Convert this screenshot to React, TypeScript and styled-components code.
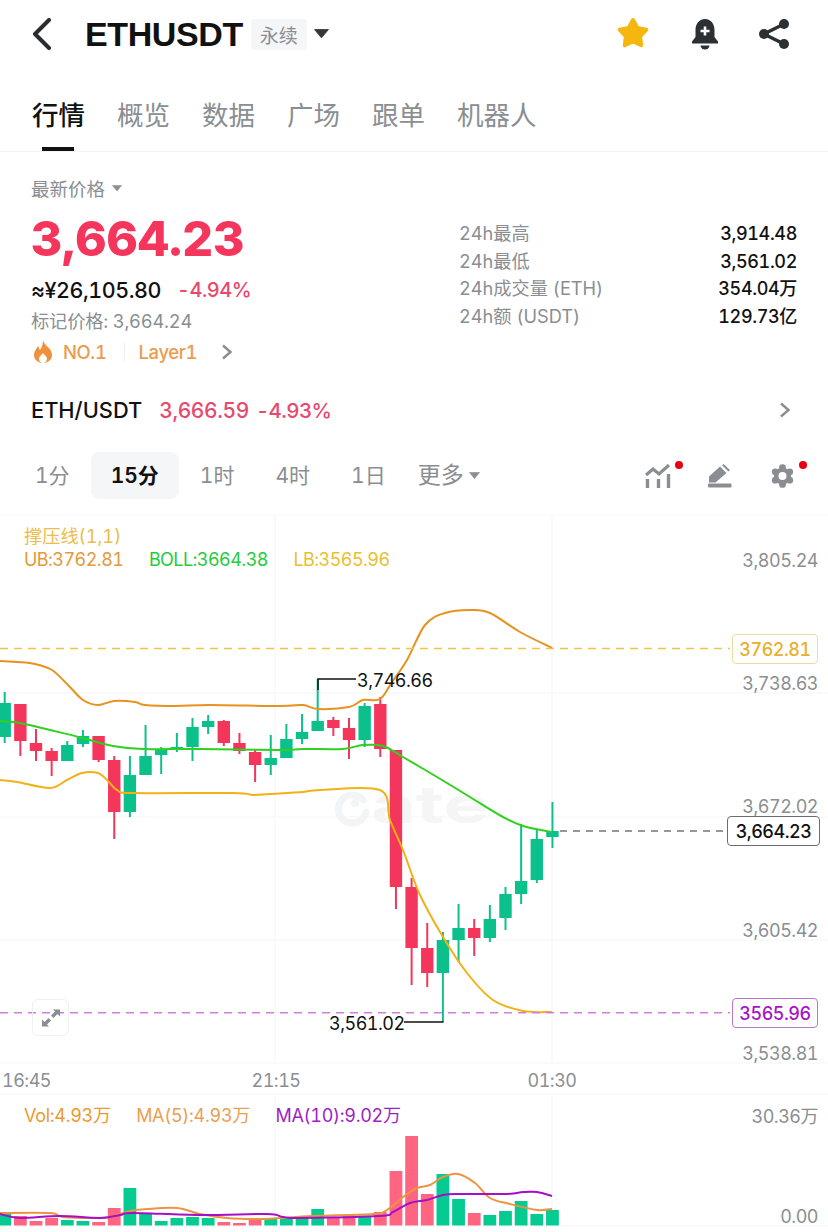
import styled, { createGlobalStyle } from 'styled-components';

const RED = '#f5365c';
const GREEN = '#0bc08a';
const GREY = '#8a8e92';

const GlobalStyle = createGlobalStyle`
    html, body {
        margin: 0;
        padding: 0;
        background: #fff;
    }
    body {
        font-family: Inter, "Noto Sans CJK SC", sans-serif;
        font-feature-settings: "tnum";
        color: #111;
    }
`;

// [high, low, body top, body bottom, up?] in page pixels, read off the screenshot
const candles: [number, number, number, number, boolean][] = [
    [692, 743, 703, 737, true], [704, 756, 704, 741, false], [729, 761, 743, 751, false],
    [748, 776, 751, 761, false], [741, 761, 745, 761, true], [730, 747, 736, 744, true],
    [736, 762, 736, 760, false], [756, 839, 760, 812, false], [756, 817, 775, 812, true],
    [725, 775, 756, 775, true], [747, 774, 749, 755, true], [733, 752, 747, 750, true],
    [718, 761, 727, 747, true], [715, 734, 721, 727, true], [720, 746, 721, 743, false],
    [733, 754, 743, 751, false], [749, 782, 752, 765, false], [735, 775, 758, 765, true],
    [724, 758, 739, 758, true], [714, 744, 732, 739, true], [679, 721, 721, 731, true],
    [717, 736, 720, 728, false], [718, 759, 728, 740, false], [703, 747, 706, 740, true],
    [697, 757, 704, 749, false], [750, 909, 750, 887, false], [878, 985, 887, 948, false],
    [923, 987, 948, 973, false], [932, 1022, 940, 973, true], [904, 962, 928, 940, true],
    [919, 956, 928, 938, false], [905, 942, 919, 938, true], [887, 930, 894, 918, true],
    [824, 904, 881, 894, true], [830, 883, 839, 880, true], [802, 848, 831, 837, true],
];

const volumes = [
    1212, 1216, 1221, 1218, 1220, 1221, 1222, 1208, 1188, 1213, 1221, 1218,
    1217, 1218, 1222, 1223, 1218, 1218, 1219, 1218, 1209, 1217, 1215, 1217,
    1212, 1171, 1136, 1194, 1174, 1199, 1213, 1215, 1211, 1201, 1214, 1210,
];

const upperBand: [number, number][] = [
    [0, 661], [18, 662], [35, 664], [52, 670], [68, 685], [83, 700], [98, 705], [114, 701], [135, 702],
    [145, 705], [176, 706], [210, 705], [280, 706], [303, 705], [318, 709], [349, 707], [363, 700],
    [380, 699], [392, 682], [407, 660], [425, 625], [445, 613], [470, 610], [490, 613], [520, 632], [552, 648],
];
const midBand: [number, number][] = [
    [0, 721], [20, 723], [50, 730], [83, 738], [113, 746], [143, 749], [200, 749], [280, 750], [303, 749],
    [343, 749], [363, 745], [383, 746], [403, 757], [437, 777], [470, 797], [503, 817], [523, 826], [552, 832],
];
const lowerBand: [number, number][] = [
    [0, 780], [17, 782], [50, 788], [67, 780], [82, 773], [98, 773], [108, 781], [117, 790], [133, 793],
    [233, 793], [253, 795], [270, 794], [303, 792], [320, 790], [380, 790], [390, 820], [403, 850],
    [420, 895], [443, 937], [467, 973], [493, 1000], [523, 1011], [552, 1012],
];
const volOrange: [number, number][] = [
    [0, 1213], [50, 1213], [63, 1217], [93, 1218], [110, 1217], [130, 1211], [147, 1209], [177, 1208],
    [200, 1214], [227, 1218], [260, 1219], [280, 1218], [313, 1216], [373, 1214], [387, 1210], [403, 1197],
    [417, 1188], [430, 1185], [443, 1177], [458, 1174], [475, 1183], [490, 1198], [510, 1204], [537, 1210], [552, 1209],
];
const volPurple: [number, number][] = [
    [0, 1214], [20, 1218], [60, 1216], [100, 1218], [120, 1215], [133, 1213], [200, 1215], [267, 1214],
    [283, 1217], [300, 1218], [380, 1216], [393, 1212], [410, 1203], [427, 1200], [443, 1195], [460, 1194],
    [507, 1194], [523, 1192], [537, 1192], [552, 1196],
];

// catmull-rom through the points, so the bands don't look like polylines
const smooth = (pts: [number, number][]) => {
    let d = `M${pts[0][0]} ${pts[0][1]}`;
    for (let i = 0; i < pts.length - 1; i++) {
        const p0 = pts[Math.max(i - 1, 0)];
        const p1 = pts[i];
        const p2 = pts[i + 1];
        const p3 = pts[Math.min(i + 2, pts.length - 1)];
        const c1x = p1[0] + (p2[0] - p0[0]) / 6;
        const c1y = p1[1] + (p2[1] - p0[1]) / 6;
        const c2x = p2[0] - (p3[0] - p1[0]) / 6;
        const c2y = p2[1] - (p3[1] - p1[1]) / 6;
        d += `C${c1x.toFixed(1)} ${c1y.toFixed(1)} ${c2x.toFixed(1)} ${c2y.toFixed(1)} ${p2[0]} ${p2[1]}`;
    }
    return d;
};

const candleX = (i: number) => 4.7 + i * 15.65;

const tabs = ['行情', '概览', '数据', '广场', '跟单', '机器人'];
const intervals = ['1分', '15分', '1时', '4时', '1日'];
const stats = [
    ['24h最高', '3,914.48'],
    ['24h最低', '3,561.02'],
    ['24h成交量 (ETH)', '354.04万'],
    ['24h额 (USDT)', '129.73亿'],
];
const axis: [number, string][] = [
    [560, '3,805.24'], [683, '3,738.63'], [806, '3,672.02'], [930, '3,605.42'], [1053, '3,538.81'],
    [1116, '30.36万'], [1216, '0.00'],
];
const gearLobes = [0, 60, 120, 180, 240, 300];

const Triangle = ({ size = 10, color = GREY }: { size?: number; color?: string }) => (
    <svg width={size} height={size * 0.62} viewBox="0 0 10 6.2">
        <path d="M0.4 0.4H9.6L5 5.9Z" fill={color} stroke={color} strokeWidth="0.6" strokeLinejoin="round" />
    </svg>
);

const Chevron = () => (
    <svg width="12" height="16" viewBox="0 0 12 16">
        <path d="M2 1.5L9.5 8L2 14.5" fill="none" stroke={GREY} strokeWidth="2.4" />
    </svg>
);

const App = () => {
    return (
        <Page>
            <GlobalStyle />
            <Header>
                <svg width="22" height="32" viewBox="0 0 22 32">
                    <path d="M18 2L4 16L18 30" fill="none" stroke="#2a2d30" strokeWidth="4" strokeLinecap="round" strokeLinejoin="round" />
                </svg>
                <Symbol>ETHUSDT</Symbol>
                <Badge>永续</Badge>
                <Triangle size={15} color="#33363a" />
                <HeaderIcons>
                    <svg width="36" height="36" viewBox="0 0 36 36">
                        <polygon
                            points="17,4 21.4,11.9 30.3,13.7 24.1,20.3 25.2,29.3 17,25.5 8.8,29.3 9.9,20.3 3.7,13.7 12.6,11.9"
                            fill="#f6b610"
                            stroke="#f6b610"
                            strokeWidth="4"
                            strokeLinejoin="round"
                        />
                    </svg>
                    <svg width="28" height="32" viewBox="0 0 28 32">
                        <path d="M14 1C8 1 4.5 6 4.5 12V19L1 23.5V25.5H27V23.5L23.5 19V12C23.5 6 20 1 14 1Z" fill="#2d3033" />
                        <path d="M9.5 27.5A4.5 4 0 0 0 18.5 27.5Z" fill="#2d3033" />
                        <path d="M14 8.5V17.5M9.5 13H18.5" stroke="#fff" strokeWidth="2.6" />
                    </svg>
                    <svg width="32" height="32" viewBox="0 0 32 32">
                        <path d="M26 6L6 16L26 26" fill="none" stroke="#2d3033" strokeWidth="3.4" />
                        <circle cx="26" cy="6" r="5" fill="#2d3033" />
                        <circle cx="6" cy="16" r="5" fill="#2d3033" />
                        <circle cx="26" cy="26" r="5" fill="#2d3033" />
                    </svg>
                </HeaderIcons>
            </Header>

            <TabBar>
                {tabs.map((t, i) => (
                    <Tab key={t} $active={i === 0}>{t}</Tab>
                ))}
            </TabBar>

            <PriceSection>
                <PriceLeft>
                    <PriceLabel>最新价格 <Triangle /></PriceLabel>
                    <BigPrice>3,664.23</BigPrice>
                    <ChangeRow>
                        <Fiat>≈¥26,105.80</Fiat>
                        <Change>-4.94%</Change>
                    </ChangeRow>
                    <MarkPrice>标记价格: 3,664.24</MarkPrice>
                    <TagRow>
                        <svg width="20" height="24" viewBox="0 0 20 24">
                            <path d="M10 0C11 5 16 7 18 11C21 17 17 23 10 23C3 23 -1 17 2 11C3 9 4 8 5 6C6 8 6 9 7 10C9 7 10 4 10 0Z" fill="#f0903c" />
                            <path d="M10 13C11 15 14 16 14 19C14 21 12 23 10 23C8 23 6 21 6 19C6 16 9 15 10 13Z" fill="#fff" />
                        </svg>
                        <TagText>NO.1</TagText>
                        <TagDivider />
                        <TagText>Layer1</TagText>
                        <TagArrow><Chevron /></TagArrow>
                    </TagRow>
                </PriceLeft>
                <StatList>
                    {stats.map(([label, value]) => (
                        <StatRow key={label}>
                            <StatLabel>{label}</StatLabel>
                            <StatValue>{value}</StatValue>
                        </StatRow>
                    ))}
                </StatList>
            </PriceSection>

            <SpotRow>
                <SpotName>ETH/USDT</SpotName>
                <SpotPrice>3,666.59</SpotPrice>
                <SpotChange>-4.93%</SpotChange>
                <SpotArrow><Chevron /></SpotArrow>
            </SpotRow>

            <IntervalBar>
                {intervals.map((t, i) => (
                    <Interval key={t} $active={i === 1}>{t}</Interval>
                ))}
                <More>更多 <Triangle size={11} /></More>
                <ToolIcons>
                    <ToolIcon>
                        <svg width="26" height="24" viewBox="0 0 26 24">
                            <path d="M1 11L8 5L14 10L24 1" fill="none" stroke={GREY} strokeWidth="3.2" />
                            <path d="M2.5 15V24M13.5 15V24M23.5 10V24" stroke={GREY} strokeWidth="3.4" />
                        </svg>
                        <RedDot />
                    </ToolIcon>
                    <ToolIcon>
                        <svg width="25" height="24" viewBox="0 0 25 24">
                            <path d="M1 18.5V12.5L12 2.5L18.5 9L7.5 18.5Z" fill={GREY} />
                            <path d="M14 1.2L15.5 0L22 6L20.5 7.6Z" fill={GREY} />
                            <rect x="0" y="19.6" width="23.5" height="4" rx="1" fill={GREY} />
                        </svg>
                    </ToolIcon>
                    <ToolIcon>
                        <svg width="25" height="24" viewBox="0 0 25 24">
                            <circle cx="12.5" cy="12" r="8.6" fill={GREY} />
                            {gearLobes.map(a => (
                                <circle
                                    key={a}
                                    cx={12.5 + 8.4 * Math.sin((a * Math.PI) / 180)}
                                    cy={12 - 8.4 * Math.cos((a * Math.PI) / 180)}
                                    r="3.4"
                                    fill={GREY}
                                />
                            ))}
                            <circle cx="12.5" cy="12" r="4" fill="#fff" />
                        </svg>
                        <RedDot />
                    </ToolIcon>
                </ToolIcons>
            </IntervalBar>

            <ChartPanel>
                <ChartSvg viewBox="0 515 828 717" width="828" height="717">
                    {/* grid */}
                    {[515, 693, 817, 940, 1063, 1094, 1226].map(y => (
                        <line key={y} x1="0" x2="828" y1={y} y2={y} stroke="#f7f8f9" strokeWidth="1.5" />
                    ))}
                    {[275, 552].map(x => (
                        <g key={x}>
                            <line x1={x} x2={x} y1="515" y2="1063" stroke="#f8f9fa" strokeWidth="1.5" />
                            <line x1={x} x2={x} y1="1094" y2="1226" stroke="#f8f9fa" strokeWidth="1.5" />
                        </g>
                    ))}

                    {/* watermark */}
                    <path d="M363 800A14 14 0 1 0 366 812" fill="none" stroke="#f3f4f5" strokeWidth="7" strokeLinecap="round" />
                    <circle cx="355" cy="803" r="4" fill="#f3f4f5" />
                    <Watermark x="371" y="823" textLength="118" lengthAdjust="spacingAndGlyphs">ate</Watermark>

                    {/* candles */}
                    {candles.map(([high, low, top, bottom, up], i) => {
                        const x = candleX(i);
                        const color = up ? GREEN : RED;
                        return (
                            <g key={i}>
                                <line x1={x} x2={x} y1={high} y2={low} stroke={color} strokeWidth="2" />
                                <rect x={x - 6.2} y={top} width="12.4" height={bottom - top} fill={color} />
                            </g>
                        );
                    })}

                    {/* bands */}
                    <path d={smooth(upperBand)} fill="none" stroke="#e8921f" strokeWidth="2" />
                    <path d={smooth(lowerBand)} fill="none" stroke="#f0b215" strokeWidth="2" />
                    <path d={smooth(midBand)} fill="none" stroke="#2fd01f" strokeWidth="2" />

                    {/* price lines */}
                    <line x1="0" x2="730" y1="648.5" y2="648.5" stroke="#f0c24a" strokeWidth="1.4" strokeDasharray="8 6" />
                    <line x1="0" x2="730" y1="1012.7" y2="1012.7" stroke="#cf80dc" strokeWidth="1.6" strokeDasharray="8 6" />
                    <line x1="560" x2="726" y1="831" y2="831" stroke="#333" strokeWidth="1.2" strokeDasharray="7 6" />

                    {/* high / low markers */}
                    <path d="M318 690V679H356" fill="none" stroke="#111" strokeWidth="1.5" />
                    <path d="M404 1022H443.500" fill="none" stroke="#111" strokeWidth="1.5" />
                    <AxisText x="357" y="680" $color="#111" $anchor="start">3,746.66</AxisText>
                    <AxisText x="329" y="1023" $color="#111" $anchor="start">3,561.02</AxisText>

                    {/* volume */}
                    {volumes.map((top, i) => (
                        <rect
                            key={i}
                            x={candleX(i) - 6.4}
                            y={top}
                            width="12.8"
                            height={1225.5 - top}
                            fill={candles[i][4] ? '#05cb93' : '#ff6580'}
                        />
                    ))}
                    <path d={smooth(volOrange)} fill="none" stroke="#ec9440" strokeWidth="2" />
                    <path d={smooth(volPurple)} fill="none" stroke="#a50fc6" strokeWidth="2" />

                    {/* axes */}
                    {axis.map(([y, label]) => (
                        <AxisText key={label} x="818" y={y} $color={GREY} $anchor="end">{label}</AxisText>
                    ))}
                    <AxisText x="2" y="1080" $color={GREY} $anchor="start">16:45</AxisText>
                    <AxisText x="276" y="1080" $color={GREY} $anchor="middle">21:15</AxisText>
                    <AxisText x="552" y="1080" $color={GREY} $anchor="middle">01:30</AxisText>
                </ChartSvg>

                <Legend $top={9}>
                    <LegendTitle>撑压线(1,1)</LegendTitle>
                    <LegendRow $tracking={-0.55}>
                        <LegendItem $color="#e29a3c">UB:3762.81</LegendItem>
                        <LegendItem $color="#24cc3a">BOLL:3664.38</LegendItem>
                        <LegendItem $color="#e9c02f">LB:3565.96</LegendItem>
                    </LegendRow>
                </Legend>
                <Legend $top={589}>
                    <LegendRow $tracking={-0.3}>
                        <LegendItem $color="#ea9a2e">Vol:4.93万</LegendItem>
                        <LegendItem $color="#eaa052">MA(5):4.93万</LegendItem>
                        <LegendItem $color="#a01fc4">MA(10):9.02万</LegendItem>
                    </LegendRow>
                </Legend>

                <PriceTag $top={119} $color="#e9b02c" $border="#efdc9c" $width={86}>3762.81</PriceTag>
                <PriceTag $top={301} $color="#111" $border="#6a6d70" $width={93} $right={8}>3,664.23</PriceTag>
                <PriceTag $top={483} $color="#a815c9" $border="#b877c8" $width={86}>3565.96</PriceTag>

                <ExpandButton>
                    <svg width="20" height="20" viewBox="0 0 20 20">
                        <path d="M12 1.500H19V8.500L16.500 6L12.500 10L10 7.500L14 3.500Z" fill={GREY} />
                        <path d="M8 18.500H1V11.500L3.500 14L7.500 10L10 12.500L6 16.500Z" fill={GREY} />
                    </svg>
                </ExpandButton>
            </ChartPanel>
        </Page>
    );
};

export default App;

const Page = styled.div`
    width: 828px;
    height: 1232px;
    overflow: hidden;
    background: #fff;
`;

const Header = styled.div`
    display: flex;
    align-items: center;
    height: 68px;
    padding: 0 38px 0 31px;
    box-sizing: border-box;
`;

const Symbol = styled.div`
    margin-left: 32px;
    font-family: "Liberation Sans", sans-serif;
    font-size: 34px;
    font-weight: 700;
    letter-spacing: -0.4px;
    color: #111;
`;

const Badge = styled.div`
    display: flex;
    align-items: center;
    justify-content: center;
    width: 56px;
    height: 31px;
    margin: 0 7px 0 8px;
    background: #f5f6f8;
    border-radius: 3px;
    color: ${GREY};
    font-size: 19px;
`;

const HeaderIcons = styled.div`
    display: flex;
    align-items: center;
    gap: 39px;
    margin-left: auto;
`;

const TabBar = styled.div`
    display: flex;
    gap: 32px;
    height: 84px;
    padding: 27px 0 0 32px;
    box-sizing: border-box;
    border-bottom: 1px solid #f3f4f5;
`;

const Tab = styled.div<{ $active?: boolean }>`
    position: relative;
    height: 40px;
    line-height: 40px;
    font-size: 26.5px;
    color: ${p => (p.$active ? '#111' : GREY)};
    font-weight: ${p => (p.$active ? 500 : 400)};
    &::after {
        content: '';
        display: ${p => (p.$active ? 'block' : 'none')};
        position: absolute;
        left: 10px;
        top: 52px;
        width: 32px;
        height: 4px;
        background: #111;
    }
`;

const PriceSection = styled.div`
    display: flex;
    padding: 23px 31px 0 31px;
`;

const PriceLeft = styled.div`
    width: 428px;
`;

const PriceLabel = styled.div`
    display: flex;
    align-items: center;
    gap: 7px;
    height: 26px;
    font-size: 18.5px;
    color: ${GREY};
`;

const BigPrice = styled.div`
    margin-top: 10px;
    line-height: 56px;
    font-size: 48.4px;
    font-weight: 800;
    color: ${RED};
`;

const ChangeRow = styled.div`
    display: flex;
    gap: 16px;
    margin-top: 8px;
    line-height: 30px;
`;

const Fiat = styled.div`
    font-size: 21.5px;
    font-weight: 500;
    letter-spacing: -0.45px;
    color: #111;
`;

const Change = styled.div`
    font-size: 20px;
    font-weight: 500;
    letter-spacing: -0.5px;
    color: #e8486e;
`;

const MarkPrice = styled.div`
    line-height: 32px;
    font-size: 18.3px;
    letter-spacing: -0.2px;
    color: ${GREY};
`;

const TagRow = styled.div`
    display: flex;
    align-items: center;
    height: 30px;
    svg:first-child {
        margin-left: 2px;
    }
`;

const TagText = styled.span`
    margin-left: 10px;
    font-size: 18.5px;
    letter-spacing: -0.4px;
    color: #ec9c4e;
    font-weight: 500;
`;

const TagDivider = styled.span`
    width: 1px;
    height: 18px;
    margin: 0 4px 0 17px;
    background: #eceef0;
`;

const TagArrow = styled.span`
    display: flex;
    margin-left: 22px;
`;

const StatList = styled.div`
    flex: 1;
    margin-top: 45px;
`;

const StatRow = styled.div`
    display: flex;
    justify-content: space-between;
    height: 27.6px;
    line-height: 27.6px;
`;

const StatLabel = styled.div`
    font-size: 18.2px;
    color: ${GREY};
`;

const StatValue = styled.div`
    font-size: 18px;
    font-weight: 500;
    letter-spacing: -0.35px;
    color: #111;
`;

const SpotRow = styled.div`
    display: flex;
    align-items: center;
    height: 42px;
    margin-top: 22px;
    padding: 0 37px 0 31px;
    font-size: 21px;
`;

const SpotName = styled.div`
    font-size: 21.8px;
    font-weight: 500;
    color: #111;
`;

const SpotPrice = styled.div`
    margin-left: 17px;
    font-weight: 500;
    letter-spacing: -0.4px;
    color: #e8486e;
`;

const SpotChange = styled.div`
    margin-left: 7px;
    font-size: 20.5px;
    font-weight: 500;
    letter-spacing: -0.6px;
    color: #e8486e;
`;

const SpotArrow = styled.div`
    display: flex;
    margin-left: auto;
`;

const IntervalBar = styled.div`
    display: flex;
    align-items: center;
    height: 47px;
    margin: 21px 0 16px;
    padding: 0 24px 0 15px;
`;

const Interval = styled.div<{ $active?: boolean }>`
    height: 47px;
    line-height: 47px;
    padding: 0 20px;
    margin-right: 1px;
    border-radius: 8px;
    background: ${p => (p.$active ? '#f5f6f8' : 'transparent')};
    color: ${p => (p.$active ? '#111' : GREY)};
    font-size: 21px;
    font-weight: ${p => (p.$active ? 600 : 400)};
`;

const More = styled.div`
    display: flex;
    align-items: center;
    gap: 5px;
    height: 47px;
    line-height: 47px;
    margin-left: 11px;
    font-size: 23px;
    color: ${GREY};
`;

const ToolIcons = styled.div`
    display: flex;
    align-items: center;
    gap: 37px;
    margin-left: auto;
    margin-right: 9px;
`;

const ToolIcon = styled.div`
    position: relative;
    display: flex;
`;

const RedDot = styled.span`
    position: absolute;
    top: -3px;
    right: -12px;
    width: 8px;
    height: 8px;
    border-radius: 50%;
    background: #e60012;
`;

const ChartPanel = styled.div`
    position: relative;
    height: 717px;
`;

const ChartSvg = styled.svg`
    display: block;
`;

const Watermark = styled.text`
    font-family: Inter, sans-serif;
    font-size: 52px;
    font-weight: 700;
    fill: #f5f5f6;
`;

const AxisText = styled.text<{ $color: string; $anchor: string }>`
    font-family: Inter, "Noto Sans CJK SC", sans-serif;
    font-size: 18px;
    letter-spacing: -0.5px;
    dominant-baseline: central;
    text-anchor: ${p => p.$anchor};
    fill: ${p => p.$color};
`;

const Legend = styled.div<{ $top: number }>`
    position: absolute;
    left: 24px;
    top: ${p => p.$top}px;
    font-size: 18px;
`;

const LegendTitle = styled.div`
    line-height: 24px;
    font-size: 18.2px;
    color: #ebbd4e;
`;

const LegendRow = styled.div<{ $tracking: number }>`
    display: flex;
    gap: 25.5px;
    line-height: 24px;
    letter-spacing: ${p => p.$tracking}px;
`;

const LegendItem = styled.span<{ $color: string }>`
    color: ${p => p.$color};
`;

const PriceTag = styled.div<{ $top: number; $color: string; $border: string; $width: number; $right?: number }>`
    position: absolute;
    top: ${p => p.$top}px;
    right: ${p => p.$right ?? 10}px;
    width: ${p => p.$width}px;
    height: 30px;
    box-sizing: border-box;
    display: flex;
    align-items: center;
    justify-content: center;
    border: 1px solid ${p => p.$border};
    border-radius: 4px;
    background: #fff;
    color: ${p => p.$color};
    font-size: 18px;
    font-weight: 500;
    letter-spacing: -0.5px;
`;

const ExpandButton = styled.div`
    position: absolute;
    left: 32px;
    top: 484px;
    width: 37px;
    height: 37px;
    box-sizing: border-box;
    display: flex;
    align-items: center;
    justify-content: center;
    border: 1px solid #eff0f2;
    border-radius: 6px;
`;
